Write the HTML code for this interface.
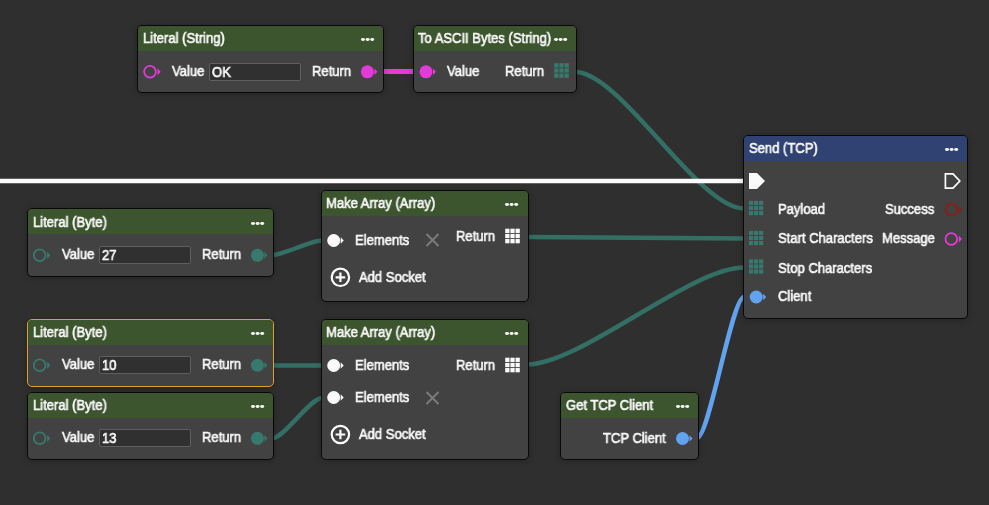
<!DOCTYPE html>
<html><head><meta charset="utf-8"><style>
html,body{margin:0;padding:0}
body{width:989px;height:505px;background:#2f2f2f;overflow:hidden;position:relative;font-family:"Liberation Sans",sans-serif;color:#f8f8f8}
.n{position:absolute;box-sizing:border-box;border:1px solid #080808;border-radius:5px;background:#424242;overflow:hidden;box-shadow:0 1px 6px rgba(0,0,0,0.25)}
.n.sel{border-color:#dca126}
.h{position:absolute;left:0;top:0;right:0;height:25.3px;background:#3c552e}
.h.blue{background:#2f4271}
.t{position:absolute;white-space:nowrap;font-size:14px;line-height:16px;transform:scaleX(0.93);transform-origin:0 0;-webkit-text-stroke:0.65px currentColor;will-change:transform}
.dots{position:absolute;width:3.6px;height:2.9px;margin-top:1.2px;border-radius:50%;background:#f4f4f4;box-shadow:4.6px 0 0 #f4f4f4,9.2px 0 0 #f4f4f4}
.inp{position:absolute;box-sizing:border-box;height:18px;border:1px solid #5f5f5f;border-radius:2px;background:#303030}
svg.ic{position:absolute;left:0;top:0;overflow:visible}
</style></head><body>
<svg width="989" height="505" style="position:absolute;left:0;top:0"><g fill="none">
<path d="M383 71.5 L414 71.5" stroke="#e23bd9" stroke-width="5"/>
<path d="M575 72 C 621 72, 698 208.5, 744 208.5" stroke="#336f64" stroke-width="4.5"/>
<path d="M0 181 L745 181" stroke="#fbfbfb" stroke-width="4.5"/>
<path d="M272 255 C 284 255, 310 240.5, 322 240.5" stroke="#336f64" stroke-width="4.5"/>
<path d="M527 237 L745 238.5" stroke="#336f64" stroke-width="4.5"/>
<path d="M272 365.5 L322 365.5" stroke="#336f64" stroke-width="4.5"/>
<path d="M272 438.5 C 284 438.5, 310 398, 322 398" stroke="#336f64" stroke-width="4.5"/>
<path d="M527 364.5 C 581 364.5, 690 267.5, 744 267.5" stroke="#336f64" stroke-width="4.5"/>
<path d="M697 438 C 709 438, 732 297, 744 297" stroke="#62a3f0" stroke-width="4.5"/>
</g></svg>
<div class="n" style="left:137px;top:25px;width:247px;height:68px"><div class="h"></div><svg class="ic" width="247" height="68" viewBox="138 26 247 68"><circle cx="150" cy="71.8" r="5.85" fill="none" stroke="#e23bd9" stroke-width="1.8"/><path d="M157.5 68.2 L160.6 71.8 L157.5 75.39999999999999Z" fill="#e23bd9"/><circle cx="367.4" cy="71.8" r="6.5" fill="#e23bd9"/><path d="M374.4 68.5 L377.4 71.8 L374.4 75.1Z" fill="#e23bd9"/></svg><div class="t" style="left:5.0px;top:3.5px">Literal (String)</div><div class="dots" style="left:223px;top:11px"></div><div class="t" style="left:33.8px;top:36.5px">Value</div><div class="inp" style="left:71px;top:36.8px;width:92px"></div><div class="t" style="left:73.5px;top:37.8px">OK</div><div class="t" style="left:174.4px;top:36.5px">Return</div></div>
<div class="n" style="left:413px;top:25px;width:164px;height:68px"><div class="h"></div><svg class="ic" width="164" height="68" viewBox="414 26 164 68"><circle cx="426" cy="71.8" r="6.5" fill="#e23bd9"/><path d="M433 68.5 L436 71.8 L433 75.1Z" fill="#e23bd9"/><g fill="#37796d"><rect x="554.20" y="63.20" width="4.27" height="4.27"/><rect x="554.20" y="68.37" width="4.27" height="4.27"/><rect x="554.20" y="73.53" width="4.27" height="4.27"/><rect x="559.37" y="63.20" width="4.27" height="4.27"/><rect x="559.37" y="68.37" width="4.27" height="4.27"/><rect x="559.37" y="73.53" width="4.27" height="4.27"/><rect x="564.53" y="63.20" width="4.27" height="4.27"/><rect x="564.53" y="68.37" width="4.27" height="4.27"/><rect x="564.53" y="73.53" width="4.27" height="4.27"/></g></svg><div class="t" style="left:4.2px;top:3.5px">To ASCII Bytes (String)</div><div class="dots" style="left:140px;top:11px"></div><div class="t" style="left:33.0px;top:36.5px">Value</div><div class="t" style="left:90.6px;top:36.5px">Return</div></div>
<div class="n" style="left:743px;top:135px;width:225px;height:184px"><div class="h blue"></div><svg class="ic" width="225" height="184" viewBox="744 136 225 184"><path d="M749 173 L757 173 L765 181 L757 189 L749 189Z" fill="#fbfbfb"/><path d="M945.4 173.8 L953.0 173.8 L959.8000000000001 181 L953.0 188.2 L945.4 188.2Z" fill="none" stroke="#fbfbfb" stroke-width="1.7" stroke-linejoin="miter"/><g fill="#37796d"><rect x="748.95" y="200.85" width="4.17" height="4.17"/><rect x="748.95" y="205.92" width="4.17" height="4.17"/><rect x="748.95" y="210.98" width="4.17" height="4.17"/><rect x="754.02" y="200.85" width="4.17" height="4.17"/><rect x="754.02" y="205.92" width="4.17" height="4.17"/><rect x="754.02" y="210.98" width="4.17" height="4.17"/><rect x="759.08" y="200.85" width="4.17" height="4.17"/><rect x="759.08" y="205.92" width="4.17" height="4.17"/><rect x="759.08" y="210.98" width="4.17" height="4.17"/></g><g fill="#37796d"><rect x="748.95" y="230.85" width="4.17" height="4.17"/><rect x="748.95" y="235.92" width="4.17" height="4.17"/><rect x="748.95" y="240.98" width="4.17" height="4.17"/><rect x="754.02" y="230.85" width="4.17" height="4.17"/><rect x="754.02" y="235.92" width="4.17" height="4.17"/><rect x="754.02" y="240.98" width="4.17" height="4.17"/><rect x="759.08" y="230.85" width="4.17" height="4.17"/><rect x="759.08" y="235.92" width="4.17" height="4.17"/><rect x="759.08" y="240.98" width="4.17" height="4.17"/></g><g fill="#37796d"><rect x="748.95" y="259.35" width="4.17" height="4.17"/><rect x="748.95" y="264.42" width="4.17" height="4.17"/><rect x="748.95" y="269.48" width="4.17" height="4.17"/><rect x="754.02" y="259.35" width="4.17" height="4.17"/><rect x="754.02" y="264.42" width="4.17" height="4.17"/><rect x="754.02" y="269.48" width="4.17" height="4.17"/><rect x="759.08" y="259.35" width="4.17" height="4.17"/><rect x="759.08" y="264.42" width="4.17" height="4.17"/><rect x="759.08" y="269.48" width="4.17" height="4.17"/></g><circle cx="756.2" cy="297" r="6.5" fill="#62a3f0"/><path d="M763.2 293.7 L766.2 297 L763.2 300.3Z" fill="#62a3f0"/><circle cx="951.3" cy="209.7" r="5.85" fill="none" stroke="#8c1d12" stroke-width="1.8"/><path d="M958.8 206.1 L961.9 209.7 L958.8 213.29999999999998Z" fill="#8c1d12"/><circle cx="951.3" cy="239" r="5.85" fill="none" stroke="#e23bd9" stroke-width="1.8"/><path d="M958.8 235.4 L961.9 239 L958.8 242.6Z" fill="#e23bd9"/></svg><div class="t" style="left:5.4px;top:3.5px">Send (TCP)</div><div class="dots" style="left:201px;top:11px"></div><div class="t" style="left:33.8px;top:64.5px">Payload</div><div class="t" style="left:33.8px;top:93.5px">Start Characters</div><div class="t" style="left:33.8px;top:123.5px">Stop Characters</div><div class="t" style="left:33.8px;top:151.5px">Client</div><div class="t" style="left:141.3px;top:64.5px">Success</div><div class="t" style="left:137.7px;top:93.5px">Message</div></div>
<div class="n" style="left:27px;top:208px;width:247px;height:69px"><div class="h"></div><svg class="ic" width="247" height="69" viewBox="28 209 247 69"><circle cx="39.7" cy="255.3" r="5.85" fill="none" stroke="#37796d" stroke-width="1.8"/><path d="M47.2 251.70000000000002 L50.300000000000004 255.3 L47.2 258.90000000000003Z" fill="#37796d"/><circle cx="257.4" cy="255.3" r="6.5" fill="#37796d"/><path d="M264.4 252.0 L267.4 255.3 L264.4 258.6Z" fill="#37796d"/></svg><div class="t" style="left:5.4px;top:4.5px">Literal (Byte)</div><div class="dots" style="left:223px;top:12px"></div><div class="t" style="left:34.1px;top:37.0px">Value</div><div class="inp" style="left:71px;top:36.900000000000006px;width:92px"></div><div class="t" style="left:73.5px;top:37.900000000000006px">27</div><div class="t" style="left:173.9px;top:37.0px">Return</div></div>
<div class="n sel" style="left:27px;top:319px;width:247px;height:68px"><div class="h"></div><svg class="ic" width="247" height="68" viewBox="28 320 247 68"><circle cx="39.7" cy="365.3" r="5.85" fill="none" stroke="#37796d" stroke-width="1.8"/><path d="M47.2 361.7 L50.300000000000004 365.3 L47.2 368.90000000000003Z" fill="#37796d"/><circle cx="257.4" cy="365.3" r="6.5" fill="#37796d"/><path d="M264.4 362.0 L267.4 365.3 L264.4 368.6Z" fill="#37796d"/></svg><div class="t" style="left:5.4px;top:3.5px">Literal (Byte)</div><div class="dots" style="left:223px;top:11px"></div><div class="t" style="left:34.1px;top:36.0px">Value</div><div class="inp" style="left:71px;top:35.89999999999998px;width:92px"></div><div class="t" style="left:73.5px;top:36.89999999999998px">10</div><div class="t" style="left:173.9px;top:36.0px">Return</div></div>
<div class="n" style="left:27px;top:392px;width:247px;height:68px"><div class="h"></div><svg class="ic" width="247" height="68" viewBox="28 393 247 68"><circle cx="39.7" cy="438.3" r="5.85" fill="none" stroke="#37796d" stroke-width="1.8"/><path d="M47.2 434.7 L50.300000000000004 438.3 L47.2 441.90000000000003Z" fill="#37796d"/><circle cx="257.4" cy="438.3" r="6.5" fill="#37796d"/><path d="M264.4 435.0 L267.4 438.3 L264.4 441.6Z" fill="#37796d"/></svg><div class="t" style="left:5.4px;top:3.5px">Literal (Byte)</div><div class="dots" style="left:223px;top:11px"></div><div class="t" style="left:34.1px;top:36.0px">Value</div><div class="inp" style="left:71px;top:35.89999999999998px;width:92px"></div><div class="t" style="left:73.5px;top:36.89999999999998px">13</div><div class="t" style="left:173.9px;top:36.0px">Return</div></div>
<div class="n" style="left:321px;top:190px;width:208px;height:112px"><div class="h"></div><svg class="ic" width="208" height="112" viewBox="322 191 208 112"><circle cx="333.7" cy="240.5" r="6.5" fill="#fbfbfb"/><path d="M340.7 237.2 L343.7 240.5 L340.7 243.8Z" fill="#fbfbfb"/><path d="M426.5 234 L438.5 246 M438.5 234 L426.5 246" stroke="#7b7b7b" stroke-width="2"/><g fill="#fbfbfb"><rect x="505.20" y="228.70" width="4.27" height="4.27"/><rect x="505.20" y="233.87" width="4.27" height="4.27"/><rect x="505.20" y="239.03" width="4.27" height="4.27"/><rect x="510.37" y="228.70" width="4.27" height="4.27"/><rect x="510.37" y="233.87" width="4.27" height="4.27"/><rect x="510.37" y="239.03" width="4.27" height="4.27"/><rect x="515.53" y="228.70" width="4.27" height="4.27"/><rect x="515.53" y="233.87" width="4.27" height="4.27"/><rect x="515.53" y="239.03" width="4.27" height="4.27"/></g><circle cx="340.4" cy="277.3" r="8.7" fill="none" stroke="#fbfbfb" stroke-width="2.2"/><path d="M335.59999999999997 277.3 L345.2 277.3 M340.4 272.5 L340.4 282.1" stroke="#fbfbfb" stroke-width="2.2"/></svg><div class="t" style="left:4.2px;top:3.5px">Make Array (Array)</div><div class="dots" style="left:183px;top:11px"></div><div class="t" style="left:32.8px;top:40.5px">Elements</div><div class="t" style="left:134.4px;top:36.5px">Return</div><div class="t" style="left:37.4px;top:77.5px">Add Socket</div></div>
<div class="n" style="left:321px;top:319px;width:208px;height:141px"><div class="h"></div><svg class="ic" width="208" height="141" viewBox="322 320 208 141"><circle cx="333.7" cy="365.5" r="6.5" fill="#fbfbfb"/><path d="M340.7 362.2 L343.7 365.5 L340.7 368.8Z" fill="#fbfbfb"/><circle cx="333.7" cy="397.5" r="6.5" fill="#fbfbfb"/><path d="M340.7 394.2 L343.7 397.5 L340.7 400.8Z" fill="#fbfbfb"/><path d="M426.5 392 L438.5 404 M438.5 392 L426.5 404" stroke="#7b7b7b" stroke-width="2"/><g fill="#fbfbfb"><rect x="505.20" y="357.70" width="4.27" height="4.27"/><rect x="505.20" y="362.87" width="4.27" height="4.27"/><rect x="505.20" y="368.03" width="4.27" height="4.27"/><rect x="510.37" y="357.70" width="4.27" height="4.27"/><rect x="510.37" y="362.87" width="4.27" height="4.27"/><rect x="510.37" y="368.03" width="4.27" height="4.27"/><rect x="515.53" y="357.70" width="4.27" height="4.27"/><rect x="515.53" y="362.87" width="4.27" height="4.27"/><rect x="515.53" y="368.03" width="4.27" height="4.27"/></g><circle cx="340.4" cy="434.5" r="8.7" fill="none" stroke="#fbfbfb" stroke-width="2.2"/><path d="M335.59999999999997 434.5 L345.2 434.5 M340.4 429.7 L340.4 439.3" stroke="#fbfbfb" stroke-width="2.2"/></svg><div class="t" style="left:4.2px;top:3.5px">Make Array (Array)</div><div class="dots" style="left:183px;top:11px"></div><div class="t" style="left:32.8px;top:36.5px">Elements</div><div class="t" style="left:32.8px;top:68.5px">Elements</div><div class="t" style="left:134.4px;top:36.5px">Return</div><div class="t" style="left:37.4px;top:105.5px">Add Socket</div></div>
<div class="n" style="left:560px;top:392px;width:139px;height:68px"><div class="h"></div><svg class="ic" width="139" height="68" viewBox="561 393 139 68"><circle cx="682.5" cy="438.5" r="6.5" fill="#62a3f0"/><path d="M689.5 435.2 L692.5 438.5 L689.5 441.8Z" fill="#62a3f0"/></svg><div class="t" style="left:5.4px;top:3.5px">Get TCP Client</div><div class="dots" style="left:115px;top:11px"></div><div class="t" style="left:42.4px;top:36.5px">TCP Client</div></div>
</body></html>
